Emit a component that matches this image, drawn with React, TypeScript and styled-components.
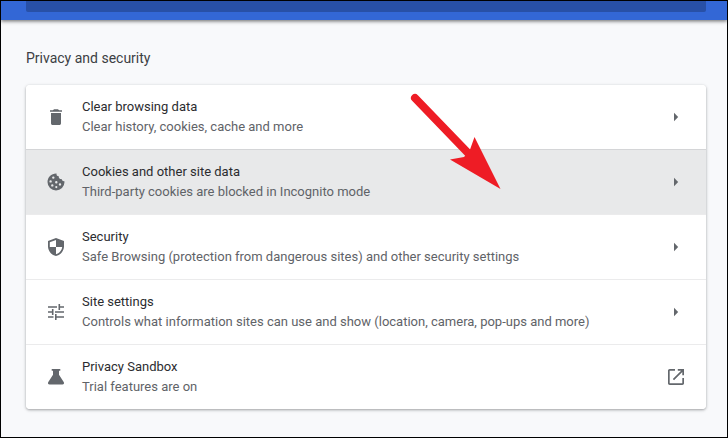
import React from "react";
import styled, { createGlobalStyle } from "styled-components";

const GlobalStyle = createGlobalStyle`
  *, *::before, *::after { box-sizing: border-box; }
  html, body, #root { height: 100%; }
  body {
    margin: 0;
    background: #f8f9fb;
    font-family: Roboto, "Liberation Sans", sans-serif;
    font-size: 13px;
    line-height: 20px;
    color: #2b2c2f;
  }
`;

const Page = styled.div`
  position: relative;
  min-height: 100%;
  border: 1px solid #000;
`;

const Toolbar = styled.header`
  padding: 0 21px 8px 25px;
  background: #3367d6;
  box-shadow: 0 1px 3px rgba(0, 0, 0, 0.4), 0 2px 4px rgba(0, 0, 0, 0.2);
`;

const SearchField = styled.div`
  height: 11px;
  border-radius: 0 0 2px 2px;
  background: #2850a7;
`;

const Section = styled.main`
  padding: 28px 21px 28px 25px;
`;

const Heading = styled.h2`
  margin: 0 0 17px;
  font-size: 14px;
  font-weight: 400;
  line-height: 20px;
  color: #3c4043;
`;

const Card = styled.div`
  overflow: hidden;
  border-radius: 4px;
  background: #fff;
  box-shadow: 0 1px 2px rgba(60, 64, 67, 0.3), 0 1px 3px 1px rgba(60, 64, 67, 0.15);
`;

const Row = styled.button<{ $active?: boolean }>`
  display: flex;
  align-items: center;
  width: 100%;
  padding: 12px 20px;
  border: 0;
  background: ${(p) => (p.$active ? "#e8e9ea" : "#fff")};
  font: inherit;
  color: inherit;
  text-align: left;
  cursor: pointer;

  &:not(:first-child) {
    border-top: 1px solid ${(p) => (p.$active ? "#d4d5d7" : "#ebebec")};
  }
`;

const Labels = styled.span`
  flex: 1;
  min-width: 0;
  padding: 0 16px;
`;

const Title = styled.span`
  display: block;
`;

const Description = styled.span`
  display: block;
  color: #5f6368;
`;

const Icon = styled.svg`
  flex: none;
  width: 20px;
  height: 20px;
  fill: #63676c;
`;

const Pointer = styled.svg`
  position: absolute;
  top: 91px;
  left: 409px;
  width: 92px;
  height: 98px;
  pointer-events: none;
`;

const CARET = "M8 5.800l4.200 4.200L8 14.200z";
const LAUNCH =
  "M16.300 16.300H3.700V3.700H9V2H3.700C2.800 2 2 2.800 2 3.700v12.600c0 .9.8 1.700 1.700 1.700h12.600c.9 0 1.700-.8 1.700-1.700V11h-1.700v5.300zM11.800 2v1.700h3.300l-8.300 8.300 1.200 1.200 8.300-8.300v3.300H18V2h-6.200z";

const items = [
  {
    title: "Clear browsing data",
    description: "Clear history, cookies, cache and more",
    icon: "M5 16.200c0 1 .7 1.800 1.700 1.800h6.600c1 0 1.700-.8 1.700-1.800V6H5zM4 3.200v1.600h12V3.200h-3L12 2.200H8L7 3.200z",
    end: CARET,
  },
  {
    title: "Cookies and other site data",
    description: "Third-party cookies are blocked in Incognito mode",
    icon: "M18.400 9.200c-1.500.2-2.700-.7-2.700-2.200-1.800.3-3.200-1-2.900-2.800-1.700.1-2.500-1.300-2.300-2.800C5.500 1.200 1.500 5.200 1.500 10a8.500 8.500 0 0 0 17 0zM7.300 4.400a1.200 1.200 0 1 1 0 2.400 1.200 1.200 0 0 1 0-2.400zM4.600 8.200a1.200 1.200 0 1 1 0 2.400 1.200 1.200 0 0 1 0-2.400zM6.300 12.200a1.200 1.200 0 1 1 0 2.400 1.200 1.200 0 0 1 0-2.400zM10.300 9a1.200 1.200 0 1 1 0 2.400 1.200 1.200 0 0 1 0-2.400zM10.300 14a1.100 1.100 0 1 1 0 2.200 1.100 1.100 0 0 1 0-2.200zM14 11.200a1.200 1.200 0 1 1 0 2.400 1.200 1.200 0 0 1 0-2.400z",
    end: CARET,
    active: true,
  },
  {
    title: "Security",
    description: "Safe Browsing (protection from dangerous sites) and other security settings",
    icon: "M10 1L2 4v5.200C2 13.800 5.300 18 10 19c4.700-1 8-5.200 8-9.800V4zM10 10h6.200c-.4 3.400-2.900 6.300-6.200 7.200v-7.200H3.800V5.200L10 2.900z",
    end: CARET,
  },
  {
    title: "Site settings",
    description: "Controls what information sites can use and show (location, camera, pop-ups and more)",
    icon: "M2 14.200v1.600h5.500v-1.600zM2 4.200v1.600h9V4.200zM10.600 18v-2.200H18v-1.600h-7.400V12H9v6zM5.900 7v2.200H2v1.600h3.900V13h1.600V7zM18 10.800V9.200H9v1.600zM12.500 8h1.600V5.800H18V4.200h-3.900V2h-1.600z",
    end: CARET,
  },
  {
    title: "Privacy Sandbox",
    description: "Trial features are on",
    icon: "M5.700 2h8.600v1.700H13v4.100l4.700 7.300c.8 1.200.1 2.400-1.200 2.400h-13c-1.300 0-2-1.200-1.200-2.400L7 7.800V3.700H5.700z",
    end: LAUNCH,
  },
];

export default function App() {
  return (
    <>
      <GlobalStyle />
      <Page>
        <Toolbar>
          <SearchField />
        </Toolbar>
        <Section>
          <Heading>Privacy and security</Heading>
          <Card>
            {items.map((item) => (
              <Row key={item.title} type="button" $active={item.active}>
                <Icon viewBox="0 0 20 20" aria-hidden="true">
                  <path fillRule="evenodd" d={item.icon} />
                </Icon>
                <Labels>
                  <Title>{item.title}</Title>
                  <Description>{item.description}</Description>
                </Labels>
                <Icon viewBox="0 0 20 20" aria-hidden="true">
                  <path d={item.end} />
                </Icon>
              </Row>
            ))}
          </Card>
        </Section>
        <Pointer viewBox="410 92 92 98" aria-hidden="true">
          <path d="M415 98L469 154" stroke="#ee1c25" strokeWidth="8" strokeLinecap="round" />
          <path d="M500.500 189L474.500 137L469.500 151L464 157L450 159.500Z" fill="#ee1c25" />
        </Pointer>
      </Page>
    </>
  );
}
